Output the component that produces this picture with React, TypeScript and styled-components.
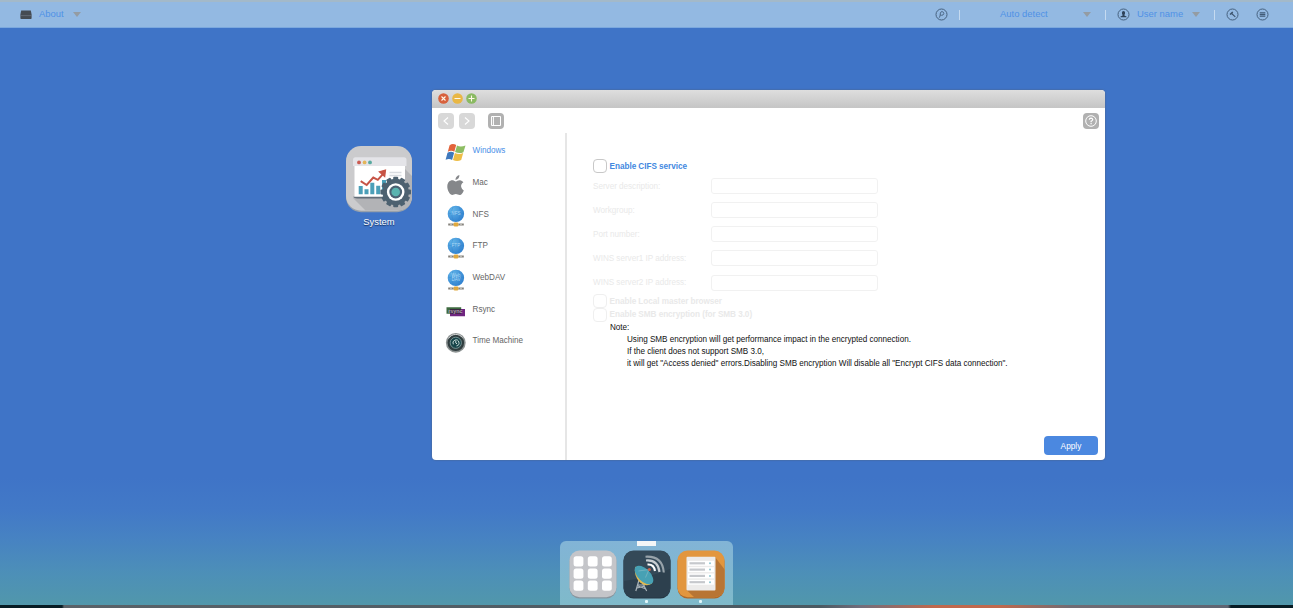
import React from 'react';
import styled, { createGlobalStyle } from 'styled-components';

const GlobalStyle = createGlobalStyle`
  * { box-sizing: border-box; }
  html, body { margin: 0; padding: 0; }
  body { font-family: "Liberation Sans", Arial, sans-serif; overflow: hidden; }
  svg { display: block; flex: none; }
`;

const Desktop = styled.div`
  position: relative;
  width: 1293px;
  height: 608px;
  display: flex;
  flex-direction: column;
  overflow: hidden;
  background: linear-gradient(180deg, #3f74c7 0, #3f74c7 478px, #4279c7 510px, #4783c2 540px, #4d90b7 575px, #5197ab 605px);
`;

const TopBar = styled.header`
  flex: none;
  height: 28px;
  display: flex;
  align-items: center;
  padding: 0 24px 0 20px;
  background: #93b9e2;
  border-top: 2px solid #a3b9c9;
  border-bottom: 1px solid #7ba8de;
`;

const BarText = styled.span<{ $w: number; $left: number }>`
  width: ${p => p.$w}px;
  margin: -1px 0 0 ${p => p.$left}px;
  font-size: 9.45px;
  line-height: 12px;
  white-space: nowrap;
  color: #4f91e6;
`;

const Caret = styled.i<{ $left: number }>`
  margin-left: ${p => p.$left}px;
  border: 4px solid transparent;
  border-top: 5px solid #949ca3;
  border-bottom: 0;
`;

const Spacer = styled.div`flex: 1;`;

const Separator = styled.i<{ $l: number; $r: number }>`
  width: 1px;
  height: 10px;
  margin: 0 ${p => p.$r}px 0 ${p => p.$l}px;
  background: #c5daf0;
`;

const BarActions = styled.div`
  display: flex;
  gap: 17px;
`;

const Shortcut = styled.div`
  position: absolute;
  left: 345px;
  top: 145px;
  width: 68px;
  display: flex;
  flex-direction: column;
  align-items: center;
`;

const ShortcutLabel = styled.span`
  margin-top: 3px;
  font-size: 9.4px;
  line-height: 12px;
  color: #fff;
  text-shadow: 0 1px 1px #17315f;
`;

const Window = styled.section`
  position: absolute;
  left: 432px;
  top: 90px;
  width: 673px;
  height: 370px;
  display: flex;
  flex-direction: column;
  overflow: hidden;
  border-radius: 4px;
  background: #fff;
  box-shadow: 0 0 1px 1px rgba(75, 105, 155, .55);
`;

const TitleBar = styled.div`
  flex: none;
  height: 18px;
  display: flex;
  align-items: center;
  gap: 3px;
  padding-left: 6px;
  background: linear-gradient(#dedede, #c6c6c6);
  border-bottom: 1px solid #c6c6c6;
`;

const ToolBar = styled.div`
  flex: none;
  height: 25px;
  display: flex;
  align-items: center;
  padding: 0 6px;
`;

const ToolButton = styled.span<{ $dim?: boolean; $gap?: number }>`
  width: 16px;
  height: 16px;
  margin-right: ${p => p.$gap ?? 0}px;
  display: flex;
  align-items: center;
  justify-content: center;
  border-radius: 4px;
  background: ${p => (p.$dim ? '#d8d8d8' : '#b1b1b1')};
`;

const Body = styled.div`
  flex: 1;
  display: flex;
  min-height: 0;
`;

const Sidebar = styled.nav`
  width: 135px;
  padding-top: 2px;
  border-right: 2px solid #e6e6e6;
`;

const SideItem = styled.div<{ $active?: boolean }>`
  height: 31.7px;
  display: flex;
  align-items: center;
  gap: 5.6px;
  padding-left: 13px;
  font-size: 8.15px;
  letter-spacing: -.02px;
  color: ${p => (p.$active ? '#4a90e8' : '#666')};
  svg { position: relative; top: 2px; }
`;

const Content = styled.main`
  flex: 1;
  display: flex;
  flex-direction: column;
  padding: 25px 7px 5px 26px;
`;

const CheckRow = styled.label<{ $disabled?: boolean }>`
  height: ${p => (p.$disabled ? 13.5 : 16)}px;
  display: flex;
  align-items: center;
  gap: 2.6px;
  font-size: 8.2px;
  font-weight: bold;
  letter-spacing: -.05px;
  color: ${p => (p.$disabled ? '#e9e9e9' : '#4388df')};
`;

const CheckBox = styled.span<{ $disabled?: boolean }>`
  width: 14px;
  height: 14px;
  flex: none;
  border: 1px solid ${p => (p.$disabled ? '#efefef' : '#c8c8c8')};
  border-radius: 4px;
  background: #fff;
`;

const Fields = styled.div`
  display: flex;
  flex-direction: column;
`;

const Field = styled.div`
  height: 24.15px;
  display: flex;
  align-items: center;
`;

const FieldLabel = styled.span`
  width: 118px;
  font-size: 8.15px;
  letter-spacing: -.02px;
  color: #e9e9e9;
`;

const Input = styled.span`
  width: 167px;
  height: 16px;
  border: 1px solid #f1f1f1;
  border-radius: 3px;
`;

const Note = styled.div`
  padding-left: 17px;
  font-size: 8.15px;
  letter-spacing: -.02px;
  line-height: 12.1px;
  color: #111;
  white-space: nowrap;
`;

const NoteLines = styled.div`padding-left: 17px;`;

const Footer = styled.div`
  margin-top: auto;
  display: flex;
  justify-content: flex-end;
`;

const ApplyButton = styled.button`
  width: 54px;
  height: 19px;
  padding: 0;
  border: 0;
  border-radius: 4px;
  background: #4b88e0;
  color: #fff;
  font: 8.3px "Liberation Sans", Arial, sans-serif;
`;

const Dock = styled.footer`
  position: relative;
  align-self: center;
  margin-top: auto;
  width: 173px;
  height: 64px;
  display: flex;
  justify-content: center;
  gap: 6px;
  padding: 8.5px 0 0 0;
  border-radius: 6px 6px 0 0;
  background: linear-gradient(#82b4d6, #7fbaca);
`;

const DockHandle = styled.i`
  position: absolute;
  top: 0;
  left: 77px;
  width: 19px;
  height: 5px;
  background: #f4f6f7;
`;

const DockItem = styled.div<{ $open?: boolean }>`
  display: flex;
  flex-direction: column;
  align-items: center;
  &::after {
    content: "";
    width: 3px;
    height: 3px;
    margin-top: 1.5px;
    border-radius: 1px;
    background: ${p => (p.$open ? '#e2f6fa' : 'transparent')};
  }
`;

const BottomEdge = styled.div`
  flex: none;
  height: 3px;
  background: linear-gradient(90deg, #071c24 0, #071c24 62px, #5a6268 64px, #4b5a62 820px, #716e7c 860px, #c0694d 935px, #c0694d 1000px, #716c73 1070px, #5f6572 1228px, #071c24 1231px);
`;

const ring = { fill: 'none', stroke: '#46617f', strokeWidth: 1 };

const DiskIcon = () => (
  <svg width="12" height="10" viewBox="0 0 12 10">
    <path d="M1.2.5h9.6L11.6 4.5V8.2Q11.6 9 10.8 9H1.2Q.4 9 .4 8.2V4.5Z" fill="#454b52" />
    <path d="M.5 5.6h11" stroke="#737d88" strokeWidth=".6" />
  </svg>
);

const BarIcon = ({ kind }: { kind: 'search' | 'user' | 'tool' | 'menu' }) => (
  <svg width="13" height="13" viewBox="0 0 13 13">
    <circle cx="6.5" cy="6.5" r="5.5" {...ring} />
    {kind === 'search' && <path d="M4.3 9.7 5.5 6.8M5.1 7.4 5.4 4.9Q5.8 3.6 7.1 3.6 8.8 3.9 8.8 5.5 8.4 7.6 6.4 7.3L5.5 6.7" {...ring} strokeWidth=".9" />}
    {kind === 'user' && <path d="M6.5 3Q8.1 3 8.1 4.8 8 6.2 7.4 6.9V7.4L9.5 8.4V9.3H3.5V8.4L5.6 7.4V6.9Q5 6.2 4.9 4.8 4.9 3 6.5 3Z" fill="#2f4359" />}
    {kind === 'tool' && <path d="M3.5 5.9 6.2 3.5 7.2 4.3 6.5 5.4 9.7 8.4 8.9 9.2 5.6 6.2 4.5 7Z" fill="#3c536c" />}
    {kind === 'menu' && <path d="M3.7 4.8h5.6M3.7 6.5h5.6M3.7 8.2h5.6" stroke="#405a76" strokeWidth="1.2" />}
  </svg>
);

const LightIcon = ({ color, mark }: { color: string; mark: string }) => (
  <svg width="11" height="11" viewBox="0 0 11 11">
    <circle cx="5.5" cy="5.5" r="5.3" fill={color} />
    <path d={mark} stroke="#fff8e8" strokeWidth="1.1" fill="none" />
  </svg>
);

const Chevron = ({ right }: { right?: boolean }) => (
  <svg width="8" height="10" viewBox="0 0 8 10">
    <path d={right ? 'M2 1.5 6 5 2 8.5' : 'M6 1.5 2 5 6 8.5'} fill="none" stroke="#fff" strokeWidth="1.1" />
  </svg>
);

const PanelIcon = () => (
  <svg width="12" height="12" viewBox="0 0 12 12">
    <path d="M1.5 1.5h9v9h-9ZM3.4 1.5v9" fill="none" stroke="#fff" strokeWidth="1" />
  </svg>
);

const HelpIcon = () => (
  <svg width="14" height="14" viewBox="0 0 14 14" fill="none" stroke="#fff">
    <circle cx="7" cy="7" r="5.3" strokeWidth="1" />
    <path d="M5.3 5.8Q5.4 4.2 7 4.2 8.8 4.3 8.7 5.7 8.6 6.5 7.1 7.2V8.2M7.1 9v1.2" strokeWidth="1.2" />
  </svg>
);

const WindowsIcon = () => (
  <svg width="22" height="22" viewBox="0 0 22 22">
    <path d="M4.6 3.2Q7.8.8 11.2 3L9.3 9.8Q6.4 8 2.8 9.7Z" fill="#e2633b" />
    <path d="M12 3.4Q15.5 5.4 20.5 3.4L18.4 10.2Q14.3 12 10.1 10.1Z" fill="#8dbd63" />
    <path d="M2.5 10.7Q6.3 8.9 9.1 10.8L7.1 17.9Q4.3 16 .6 17.7Z" fill="#3f79bd" />
    <path d="M9.9 11.1Q14 13.1 18.2 11.1L16.2 18Q12 20 8 18Z" fill="#edbd46" />
  </svg>
);

const AppleIcon = () => (
  <svg width="22" height="22" viewBox="0 0 22 22" fill="#85878a">
    <path d="M14.4 1Q14.5 5 10.5 6 10.3 2.3 14.4 1Z" />
    <path d="M10.7 7.4C12 7.1 13 6 15.2 6.2Q17.2 6.5 18.4 8.2 15.5 10.1 16.2 13.1 16.7 15.4 18.8 16.4 17 20.7 15 20.9C13.3 21 12.5 20 10.8 20 9.2 20 8.4 21 7 20.9 4.6 20.5 2.1 15.7 2.3 12.2 2.5 7.2 6.5 5.2 9 6.7Z" />
  </svg>
);

const Globe = ({ lines }: { lines: string[] }) => (
  <svg width="22" height="22" viewBox="0 0 22 22">
    <defs>
      <radialGradient id="globe" cx=".3" cy=".25" r=".8">
        <stop offset="0" stopColor="#62b4e8" /><stop offset="1" stopColor="#3182d0" />
      </radialGradient>
    </defs>
    <circle cx="10.9" cy="8.9" r="8.2" fill="url(#globe)" />
    <path d="M8 2Q5 8 8.5 16M14 1.5Q17 8 13 16M3 8q8 3 16 0" stroke="#2f84cc" strokeWidth=".4" fill="none" />
    <path d="M3.2 19.5h5.5M13.3 19.5h5.5" stroke="#85827c" strokeWidth="1.8" />
    <path d="M5 19.3h2M15 19.3h2" stroke="#d8d8d2" strokeWidth=".8" />
    <rect x="8.6" y="17.6" width="4.8" height="3.8" rx="1.2" fill="#dfa940" />
    {lines.map((t, i) => (
      <text key={t} x="10.9" y={(lines.length > 1 ? 8.2 : 10.4) + i * 4} textAnchor="middle" fontSize="4.6" fill="#a9d6f5">{t}</text>
    ))}
  </svg>
);

const RsyncIcon = () => (
  <svg width="22" height="22" viewBox="0 0 22 22">
    <path d="M1.5 7.2h14.7v6.6H1.5Z" fill="#3e6a40" />
    <path d="M5 9h15v7.2H5Z" fill="#6f2580" />
    <path d="M5 9h11.2v4.8H5Z" fill="#3a2740" />
    <text x="10.4" y="12.9" textAnchor="middle" fontSize="5.4" fontWeight="bold" fill="#b3a3b4">rsync</text>
  </svg>
);

const TimeIcon = () => (
  <svg width="22" height="22" viewBox="0 0 22 22">
    <circle cx="10.8" cy="10.8" r="9.9" fill="#8c9292" />
    <circle cx="10.8" cy="10.8" r="8.3" fill="#303d3f" />
    <circle cx="10.8" cy="10.8" r="5.6" fill="#174449" stroke="#87a3a5" strokeWidth=".8" />
    <path d="M8.3 12.3A3 3 0 1 1 11.5 13.9M10.8 8.8V11l1.4 1" fill="none" stroke="#c9dcda" strokeWidth="1" />
    <path d="M3.6 6.4A8.6 8.6 0 0 1 17.5 5.6" stroke="#ddd" strokeWidth=".9" fill="none" />
  </svg>
);

const gearTeeth = Array.from({ length: 12 }, (_, i) => i * 30);

const SystemIcon = () => (
  <svg width="68" height="68" viewBox="0 0 68 68">
    <rect x="1" y="2" width="66" height="65.2" rx="15" fill="#98a1ab" />
    <rect x="1" y="1" width="66" height="64.7" rx="15" fill="#cbcbcd" />
    <path d="M8 53 20.5 65.5H52Q66.5 65 67 51V31L60 24Z" fill="#b2b3b6" />
    <path d="M9.5 14H60V53H9.5Z" fill="#fff" />
    <path d="M8 21V15Q8 12.3 10.5 12.3H59Q61.5 12.3 61.5 15V21Z" fill="#e4e4e8" />
    <circle cx="14" cy="17.4" r="1.9" fill="#cb5c52" /><circle cx="19.6" cy="17.4" r="1.9" fill="#e4b65b" /><circle cx="25" cy="17.4" r="1.9" fill="#58aaa0" />
    <path d="M8 51.7h34v1.8H12Q9 53.5 8 51.7Z" fill="#616d78" />
    <path d="M13.7 49.2V41h4v8.2ZM19.5 49.2V44.3h4v4.9ZM25.3 49.2V37.7h4v11.5ZM31.2 49.2V40.7h4v8.5ZM37 49.2V35h4v14.2Z" fill="#4b9fb8" />
    <path d="m15.7 36.2 6 3.8 6.6-7.4 4.5 2.2 6.2-7" fill="none" stroke="#c75446" strokeWidth="2" />
    <path d="m34.3 26.8 6.2-1.8-.8 6.6Z" fill="#c75446" stroke="#c75446" strokeWidth="1.2" />
    <path d="M44.5 27.5h12M44.5 30.5h12" stroke="#d8dbe0" strokeWidth="1.3" />
    <g transform="translate(50.7 47)">
      {gearTeeth.map(a => <rect key={a} x="-2.5" y="-15.3" width="5" height="7" rx="1" fill="#4d6170" transform={`rotate(${a})`} />)}
      <circle r="13.2" fill="#4d6170" />
      <circle r="8.8" fill="#fff" /><circle r="6.4" fill="#4b6273" /><circle r="4.3" fill="#5ab4b0" />
    </g>
  </svg>
);

const cells = [0, 1, 2, 3, 4, 5, 6, 7, 8];

const GridApp = () => (
  <svg width="48" height="49" viewBox="0 0 48 49">
    <rect x=".5" y="1.5" width="47" height="47" rx="10" fill="#89959e" />
    <rect x=".5" y=".5" width="47" height="46.7" rx="10" fill="#c4c5c9" />
    {cells.map(i => <rect key={i} x={4.6 + (i % 3) * 14.2} y={6.3 + Math.floor(i / 3) * 12.1} width="9.8" height="10.3" rx="2.5" fill="#fff" />)}
  </svg>
);

const DishApp = () => (
  <svg width="48" height="49" viewBox="0 0 48 49">
    <rect x=".5" y="1" width="47" height="47.5" rx="10" fill="#263744" />
    <rect x=".5" y=".5" width="47" height="46.7" rx="10" fill="#344958" />
    <path d="M1 31Q25 28 47 19V37Q47 47 37 47H11Q1 47 1 37Z" fill="#2d404e" />
    <path d="M16 30 12.8 41M18 30l5.7 11M15 35h6M14 38l8-2M15 36l8 3" stroke="#a9b3b9" strokeWidth="1.2" />
    <path d="M12.3 16.5Q10.3 26 17 32.5 23.5 37.5 29 33.5Z" fill="#e0ba51" />
    <ellipse cx="21" cy="25" rx="11.6" ry="6.2" transform="rotate(45 21 25)" fill="#47a1b4" />
    <path d="m15.5 21 10.5-1.5-3.5 8" stroke="#7fb9c4" fill="none" strokeWidth=".7" /><circle cx="26.4" cy="19.5" r="1.5" fill="#cf654e" />
    <g fill="none" strokeWidth="2.1"><path d="M24.5 14.5Q31 14 32 21" stroke="#fff" /><path d="M23 10.5Q35 9.5 36.5 22" stroke="#c9ced2" /><path d="M22.5 6.7Q39.5 5.8 40.8 22.5" stroke="#98a3aa" /></g>
  </svg>
);

const ListApp = () => (
  <svg width="48" height="49" viewBox="0 0 48 49">
    <defs><clipPath id="list-tile"><rect x=".5" y=".5" width="47" height="46.7" rx="10" /></clipPath></defs>
    <rect x=".5" y="1.5" width="47" height="47" rx="10" fill="#ad692b" />
    <g clipPath="url(#list-tile)">
      <path d="M0 0h48v48H0Z" fill="#e2963e" />
      <path d="m38 7 10 13V48H18L9.5 40Z" fill="#b87534" />
    </g>
    <rect x="9.5" y="6.8" width="29" height="33.7" rx="1" fill="#ecebea" />
    {[0, 1, 2, 3].map(i => <g key={i}><rect x="11" y={10.9 + i * 6.3} width="26" height="4.9" fill="#fff" /><path d={`M12.5 ${13.3 + i * 6.3}h15.5`} stroke="#c6c8cc" strokeWidth="2.2" /><circle cx="33" cy={13.3 + i * 6.3} r="1" fill="#8ec6d2" /></g>)}
  </svg>
);

const services: { name: string; icon: React.ReactNode }[] = [
  { name: 'Windows', icon: <WindowsIcon /> },
  { name: 'Mac', icon: <AppleIcon /> },
  { name: 'NFS', icon: <Globe lines={['NFS']} /> },
  { name: 'FTP', icon: <Globe lines={['FTP']} /> },
  { name: 'WebDAV', icon: <Globe lines={['Web', 'DAV']} /> },
  { name: 'Rsync', icon: <RsyncIcon /> },
  { name: 'Time Machine', icon: <TimeIcon /> },
];

const fields = ['Server description:', 'Workgroup:', 'Port number:', 'WINS server1 IP address:', 'WINS server2 IP address:'];

export default function App() {
  return (
    <Desktop>
      <GlobalStyle />
      <TopBar>
        <DiskIcon />
        <BarText $left={7} $w={26}>About</BarText>
        <Caret $left={7.5} />
        <Spacer />
        <BarIcon kind="search" />
        <Separator $l={11} $r={0} />
        <BarText $left={40} $w={50}>Auto detect</BarText>
        <Caret $left={33} />
        <Separator $l={14} $r={11} />
        <BarIcon kind="user" />
        <BarText $left={7} $w={48}>User name</BarText>
        <Caret $left={7} />
        <Separator $l={14} $r={11} />
        <BarActions>
          <BarIcon kind="tool" />
          <BarIcon kind="menu" />
        </BarActions>
      </TopBar>

      <Shortcut>
        <SystemIcon />
        <ShortcutLabel>System</ShortcutLabel>
      </Shortcut>

      <Window>
        <TitleBar>
          <LightIcon color="#d8613c" mark="m3.5 3.5 4 4m0-4-4 4" />
          <LightIcon color="#e9b744" mark="M2.5 5.5h6" />
          <LightIcon color="#8aba62" mark="M2.5 5.5h6m-3-3v6" />
        </TitleBar>
        <ToolBar>
          <ToolButton $dim $gap={5}><Chevron /></ToolButton>
          <ToolButton $dim $gap={13}><Chevron right /></ToolButton>
          <ToolButton><PanelIcon /></ToolButton>
          <Spacer />
          <ToolButton><HelpIcon /></ToolButton>
        </ToolBar>
        <Body>
          <Sidebar>
            {services.map((s, i) => <SideItem key={s.name} $active={i === 0}>{s.icon}{s.name}</SideItem>)}
          </Sidebar>
          <Content>
            <CheckRow><CheckBox />Enable CIFS service</CheckRow>
            <Fields>
              {fields.map(f => <Field key={f}><FieldLabel>{f}</FieldLabel><Input /></Field>)}
            </Fields>
            <CheckRow $disabled><CheckBox $disabled />Enable Local master browser</CheckRow>
            <CheckRow $disabled><CheckBox $disabled />Enable SMB encryption (for SMB 3.0)</CheckRow>
            <Note>
              Note:
              <NoteLines>
                Using SMB encryption will get performance impact in the encrypted connection.<br />
                If the client does not support SMB 3.0,<br />
                it will get "Access denied" errors.Disabling SMB encryption Will disable all "Encrypt CIFS data connection".
              </NoteLines>
            </Note>
            <Footer><ApplyButton>Apply</ApplyButton></Footer>
          </Content>
        </Body>
      </Window>

      <Dock>
        <DockHandle />
        <DockItem><GridApp /></DockItem>
        <DockItem $open><DishApp /></DockItem>
        <DockItem $open><ListApp /></DockItem>
      </Dock>
      <BottomEdge />
    </Desktop>
  );
}
